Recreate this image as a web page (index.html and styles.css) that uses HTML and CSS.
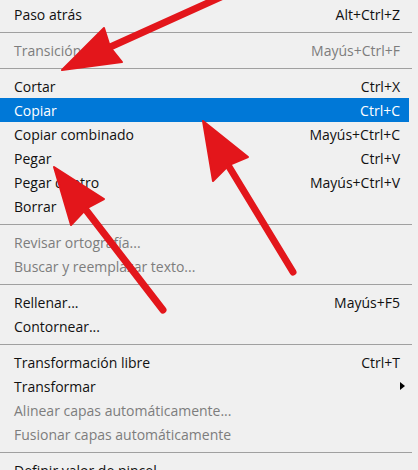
FILE: index.html
```html
<!DOCTYPE html>
<html lang="es">
<head>
<meta charset="utf-8">
<title>Menú Edición</title>
<link rel="stylesheet" href="styles.css">
</head>
<body>
<div class="menu">
  <div class="item"><span class="label">Paso atrás</span><span class="key">Alt+Ctrl+Z</span></div>
  <div class="sep"></div>
  <div class="item disabled"><span class="label">Transición</span><span class="key">Mayús+Ctrl+F</span></div>
  <div class="sep"></div>
  <div class="item"><span class="label">Cortar</span><span class="key">Ctrl+X</span></div>
  <div class="item active"><span class="label">Copiar</span><span class="key">Ctrl+C</span></div>
  <div class="item"><span class="label">Copiar combinado</span><span class="key">Mayús+Ctrl+C</span></div>
  <div class="item"><span class="label">Pegar</span><span class="key">Ctrl+V</span></div>
  <div class="item"><span class="label">Pegar dentro</span><span class="key">Mayús+Ctrl+V</span></div>
  <div class="item"><span class="label">Borrar</span><span class="key"></span></div>
  <div class="sep"></div>
  <div class="item disabled"><span class="label">Revisar ortografía...</span><span class="key"></span></div>
  <div class="item disabled"><span class="label">Buscar y reemplazar texto...</span><span class="key"></span></div>
  <div class="sep"></div>
  <div class="item"><span class="label">Rellenar...</span><span class="key">Mayús+F5</span></div>
  <div class="item"><span class="label">Contornear...</span><span class="key"></span></div>
  <div class="sep"></div>
  <div class="item"><span class="label">Transformación libre</span><span class="key">Ctrl+T</span></div>
  <div class="item"><span class="label">Transformar</span><span class="key"><span class="sub"></span></span></div>
  <div class="item disabled"><span class="label">Alinear capas automáticamente...</span><span class="key"></span></div>
  <div class="item disabled"><span class="label">Fusionar capas automáticamente</span><span class="key"></span></div>
  <div class="sep"></div>
  <div class="item"><span class="label">Definir valor de pincel...</span><span class="key"></span></div>
</div>
<svg class="arrows" width="418" height="470" viewBox="0 0 418 470" aria-hidden="true">
  <g fill="#e3161b" stroke="#e3161b" stroke-linejoin="round">
    <line x1="108" y1="48" x2="232" y2="-8" stroke-width="7" stroke-linecap="round"/>
    <polygon points="62,70 104,28 110,47 122,62" stroke-width="2"/>
    <line x1="228" y1="165" x2="293" y2="272" stroke-width="7" stroke-linecap="round"/>
    <polygon points="203,121 248,157 229,165 213,181" stroke-width="2"/>
    <line x1="86" y1="210" x2="163" y2="310" stroke-width="7" stroke-linecap="round"/>
    <polygon points="54,167 104,199 87,208 71,225" stroke-width="2"/>
  </g>
</svg>
</body>
</html>
```
FILE: styles.css
```css
html, body {
  margin: 0;
  padding: 0;
  background: #f0f0f0;
}
body {
  width: 418px;
  height: 470px;
  overflow: hidden;
  position: relative;
  font-family: "Open Sans", "Noto Sans", "DejaVu Sans", sans-serif;
  font-size: 14px;
  color: #111;
}
.menu {
  width: 409px;
  padding-top: 2px;
}
.item {
  height: 24px;
  display: flex;
  align-items: center;
  justify-content: space-between;
  padding: 0 9px 0 14px;
  white-space: nowrap;
}
.item.disabled {
  color: #7d7d7d;
}
.item.active {
  background: #0078d7;
  color: #fff;
}
.key {
  display: flex;
  align-items: center;
}
.sub {
  width: 0;
  height: 0;
  border-top: 4.5px solid transparent;
  border-bottom: 4.5px solid transparent;
  border-left: 5px solid #000;
  margin-right: -5px;
}
.sep {
  height: 1px;
  background: #a0a0a0;
  margin: 6px 0 5px 0;
  width: 412px;
}
.arrows {
  position: absolute;
  left: 0;
  top: 0;
}
```
